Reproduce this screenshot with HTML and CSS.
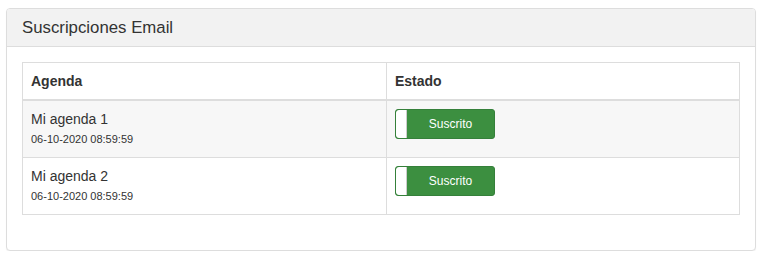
FILE: index.html
```html
<!DOCTYPE html>
<html>
<head>
<meta charset="utf-8">
<link rel="stylesheet" href="styles.css">
</head>
<body>
<div class="panel">
  <div class="panel-heading"><h3 class="panel-title">Suscripciones Email</h3></div>
  <div class="panel-body">
    <table class="table">
      <colgroup><col class="col-agenda"><col></colgroup>
      <thead>
        <tr><th>Agenda</th><th>Estado</th></tr>
      </thead>
      <tbody>
        <tr class="striped">
          <td><div class="name">Mi agenda 1</div><div class="date">06-10-2020 08:59:59</div></td>
          <td><div class="toggle"><span class="handle"></span><span class="label">Suscrito</span></div></td>
        </tr>
        <tr>
          <td><div class="name">Mi agenda 2</div><div class="date">06-10-2020 08:59:59</div></td>
          <td><div class="toggle"><span class="handle"></span><span class="label">Suscrito</span></div></td>
        </tr>
      </tbody>
    </table>
  </div>
</div>
</body>
</html>
```
FILE: styles.css
```css
html, body { margin: 0; padding: 0; background: #fff; }
body {
  padding: 8px 11px 0 6px;
  font-family: "Liberation Sans", Arial, sans-serif;
  font-size: 14px;
  line-height: 20px;
  color: #333;
}
.panel {
  border: 1px solid #ddd;
  border-radius: 4px;
  background: #fff;
  box-shadow: 0 1px 1px rgba(0,0,0,0.05);
}
.panel-heading {
  background: #f2f2f2;
  border-bottom: 1px solid #ddd;
  border-radius: 3px 3px 0 0;
  padding: 10px 15px;
}
.panel-title {
  margin: 0;
  font-size: 16.8px;
  font-weight: normal;
  line-height: 17px;
  color: #333;
}
.panel-body { padding: 15px; }
.table {
  width: 100%;
  border-collapse: collapse;
  border: 1px solid #ddd;
  margin-bottom: 20px;
  table-layout: fixed;
}
.col-agenda { width: 364px; }
.table th, .table td {
  border: 1px solid #ddd;
  padding: 8px;
  text-align: left;
  vertical-align: top;
}
.table th {
  font-weight: bold;
  border-bottom-width: 2px;
}
.striped { background: #f7f7f7; }
.name { font-size: 14px; line-height: 20px; }
.date { font-size: 11px; line-height: 20px; }
.toggle {
  display: flex;
  width: 100px;
  height: 30px;
  box-sizing: border-box;
  border: 1px solid #35803a;
  border-radius: 3px;
  background: #3c8f40;
  overflow: hidden;
}
.handle {
  width: 10px;
  background: #fff;
  border-right: 1px solid #ccc;
  border-radius: 3px 0 0 3px;
}
.label {
  flex: 1;
  color: #fff;
  font-size: 12px;
  line-height: 28px;
  text-align: center;
}
```
